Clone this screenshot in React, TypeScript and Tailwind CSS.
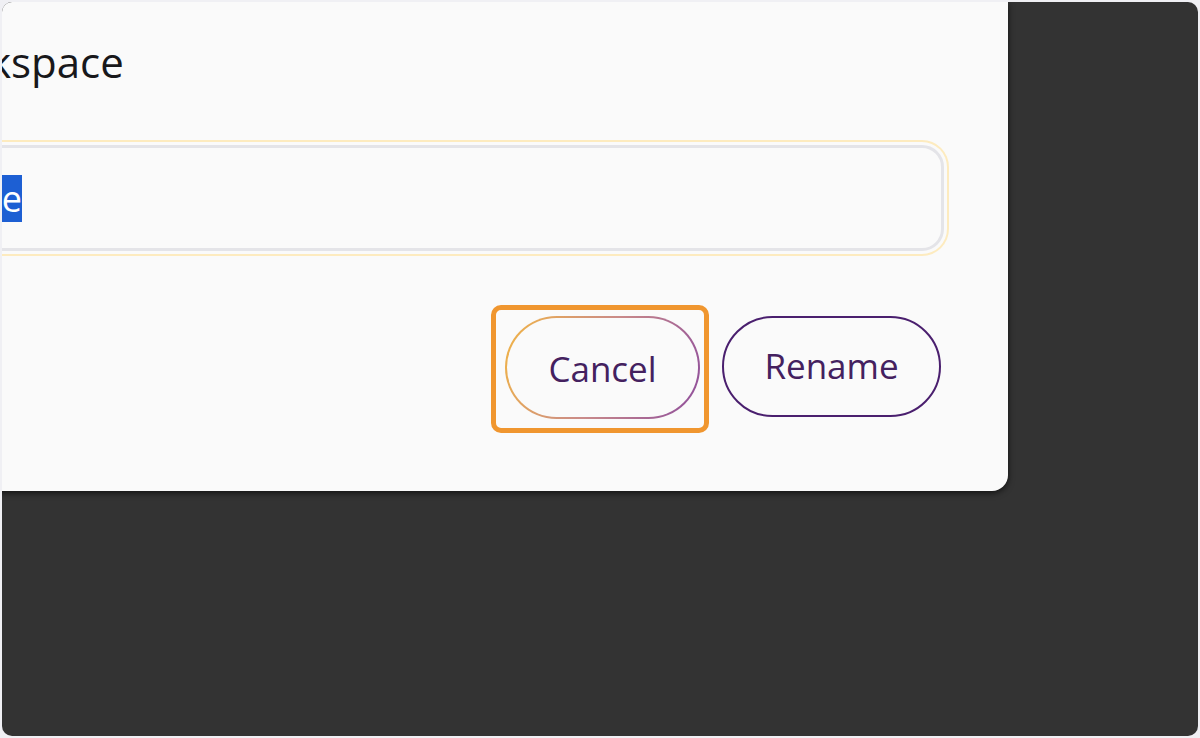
export default function App() {
  return (
    <div className="h-[738px] w-[1200px] bg-[#f0f0f4] p-[2px] font-['Open_Sans',sans-serif]">
      <div className="h-full w-full overflow-hidden rounded-[10px] bg-[#333333]">
        <RenameDialog />
      </div>
    </div>
  );
}

function RenameDialog() {
  return (
    <div className="ml-[-311px] w-[1317px] rounded-br-[16px] bg-[#fafafa] pb-[72px] pl-[51px] pr-[64px] pt-[31px] shadow-[0_2px_6px_rgba(0,0,0,0.65)]">
      <h2 className="whitespace-nowrap text-[42px] leading-[57px] font-normal text-[#18181b]">
        Rename workspace
      </h2>

      <div className="mt-[55px] flex h-[106px] items-center rounded-[22px] border-[3px] border-[#e4e4e8] bg-[#fafafa] pl-[32px] shadow-[0_0_0_3px_#fafafa,0_0_0_5px_#fdebbf]">
        <span className="whitespace-nowrap bg-[#1d5fd3] text-[36px] font-normal leading-[47px] text-white">
          My Workspace
        </span>
      </div>

      <div className="mt-[65px] flex justify-end gap-[22px] pr-[3px]">
        <div className="relative">
          <button
            type="button"
            className="h-[103px] w-[195px] rounded-full border-2 border-transparent pt-[3px] text-[35px] font-normal text-[#44215f] [background:linear-gradient(#fafafa,#fafafa)_padding-box,linear-gradient(110deg,#f2b544,#c98a8a_50%,#8d4c9c)_border-box]"
          >
            Cancel
          </button>
          <span className="pointer-events-none absolute -bottom-[14px] -left-[14px] -right-[9px] -top-[11px] rounded-[10px] border-[5px] border-[#f0962f]" />
        </div>
        <button
          type="button"
          className="h-[101px] w-[219px] rounded-full border-2 border-[#4a1f6e] bg-[#fafafa] text-[35px] font-normal text-[#44215f]"
        >
          Rename
        </button>
      </div>
    </div>
  );
}
